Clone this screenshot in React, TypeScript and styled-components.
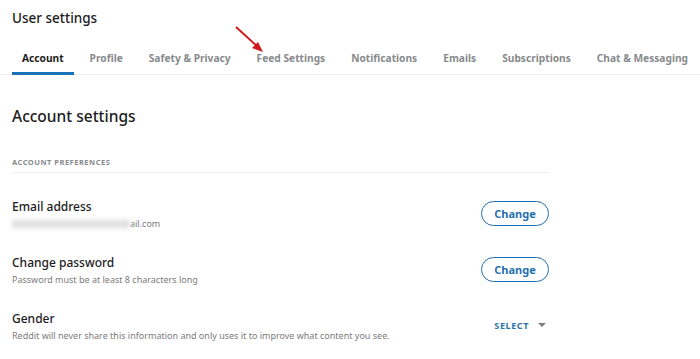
import React from "react";
import styled, { createGlobalStyle } from "styled-components";

const GlobalStyle = createGlobalStyle`
  html, body {
    margin: 0;
    padding: 0;
    background: #ffffff;
    font-family: "Noto Sans", "Open Sans", sans-serif;
    color: #1c1c1c;
  }
`;

const Page = styled.div`
  position: relative;
  width: 700px;
  height: 359px;
  overflow: hidden;
  background: #fff;
`;

const Title = styled.h1`
  margin: 0;
  padding: 8px 12px 0;
  font-size: 13.5px;
  font-weight: 500;
  line-height: 20px;
  color: #1c1c1c;
`;

const TabBar = styled.nav`
  display: flex;
  gap: 6px;
  padding: 0 0 0 12px;
  margin-top: 16px;
  border-bottom: 1px solid #edeff1;
  white-space: nowrap;
`;

const Tab = styled.div<{ $active?: boolean }>`
  padding: 0 10px;
  height: 31px;
  line-height: 28px;
  font-size: 10.2px;
  font-weight: 700;
  color: ${(p) => (p.$active ? "#1c1c1c" : "#878a8c")};
  border-bottom: 3px solid ${(p) => (p.$active ? "#1a72b8" : "transparent")};
  box-sizing: border-box;
  margin-bottom: -1px;
`;

const Content = styled.div`
  padding: 0 12px;
  width: 537px;
`;

const SectionTitle = styled.h2`
  margin: 30px 0 0;
  font-size: 15.5px;
  font-weight: 500;
  line-height: 22px;
`;

const GroupLabel = styled.div`
  margin-top: 30px;
  padding-bottom: 5px;
  font-size: 7.5px;
  font-weight: 700;
  letter-spacing: 0.5px;
  color: #878a8c;
  border-bottom: 1px solid #edeff1;
`;

const Rows = styled.div`
  margin-top: 12px;
`;

const Row = styled.div`
  display: flex;
  align-items: center;
  justify-content: space-between;
  height: 56px;
`;

const RowText = styled.div`
  display: flex;
  flex-direction: column;
  gap: 2px;
  padding-top: 2px;
`;

const RowTitle = styled.div`
  font-size: 12px;
  font-weight: 500;
  line-height: 17px;
  color: #1c1c1c;
`;

const RowHint = styled.div`
  font-size: 9px;
  line-height: 14px;
  color: #7c7c7c;
`;

const Blur = styled.span`
  display: inline-block;
  width: 118px;
  height: 8px;
  vertical-align: middle;
  background: #e0e0e0;
  filter: blur(2px);
`;

const PillButton = styled.button`
  width: 68px;
  height: 25px;
  border: 1px solid #1f6fb2;
  border-radius: 13px;
  background: #fff;
  color: #1f6fb2;
  font-family: "Noto Sans", sans-serif;
  font-size: 11px;
  font-weight: 700;
  cursor: pointer;
`;

const Select = styled.div`
  display: flex;
  align-items: center;
  gap: 9px;
  margin-right: 3px;
  font-size: 9px;
  font-weight: 700;
  letter-spacing: 0.6px;
  color: #2a72a8;
`;

const Caret = styled.span`
  width: 0;
  height: 0;
  border-left: 4px solid transparent;
  border-right: 4px solid transparent;
  border-top: 4px solid #7c7c7c;
`;

const Arrow = styled.svg`
  position: absolute;
  left: 230px;
  top: 22px;
`;

const tabs = [
  "Account",
  "Profile",
  "Safety & Privacy",
  "Feed Settings",
  "Notifications",
  "Emails",
  "Subscriptions",
  "Chat & Messaging",
];

export default function App() {
  return (
    <Page>
      <GlobalStyle />
      <Title>User settings</Title>
      <TabBar>
        {tabs.map((t, i) => (
          <Tab key={t} $active={i === 0}>
            {t}
          </Tab>
        ))}
      </TabBar>
      <Content>
        <SectionTitle>Account settings</SectionTitle>
        <GroupLabel>ACCOUNT PREFERENCES</GroupLabel>
        <Rows>
          <Row>
            <RowText>
              <RowTitle>Email address</RowTitle>
              <RowHint>
                <Blur />
                ail.com
              </RowHint>
            </RowText>
            <PillButton>Change</PillButton>
          </Row>
          <Row>
            <RowText>
              <RowTitle>Change password</RowTitle>
              <RowHint>Password must be at least 8 characters long</RowHint>
            </RowText>
            <PillButton>Change</PillButton>
          </Row>
          <Row>
            <RowText>
              <RowTitle>Gender</RowTitle>
              <RowHint>
                Reddit will never share this information and only uses it to improve what content you see.
              </RowHint>
            </RowText>
            <Select>
              SELECT <Caret />
            </Select>
          </Row>
        </Rows>
      </Content>
      <Arrow width="40" height="36" viewBox="0 0 40 36">
        <line x1="6" y1="5" x2="29" y2="26" stroke="#d0191b" strokeWidth="2" />
        <polygon points="33,30 22,26 28,20" fill="#d0191b" />
      </Arrow>
    </Page>
  );
}
